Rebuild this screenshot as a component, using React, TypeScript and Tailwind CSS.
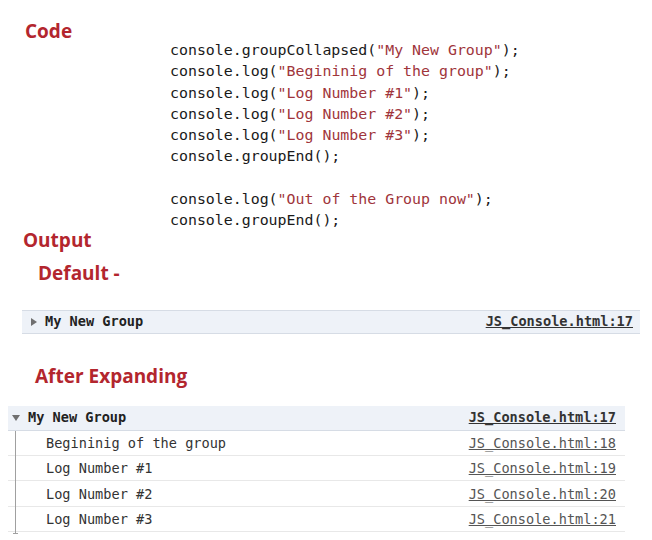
import React from "react";

const mono = { fontFamily: '"DejaVu Sans Mono", "Liberation Mono", monospace' };
const heading = { fontFamily: '"Open Sans", "Noto Sans", sans-serif' };

const S = ({ children }: { children: React.ReactNode }) => (
  <span className="text-[#a0353b]">{children}</span>
);

function Right() {
  return (
    <svg width="6" height="8" viewBox="0 0 6 8" className="shrink-0">
      <path d="M0 0 L6 4 L0 8 Z" fill="#707070" />
    </svg>
  );
}
function Down() {
  return (
    <svg width="8" height="6" viewBox="0 0 8 6" className="shrink-0">
      <path d="M0 0 L8 0 L4 6 Z" fill="#707070" />
    </svg>
  );
}

const rows = [
  ["Begininig of the group", "JS_Console.html:18"],
  ["Log Number #1", "JS_Console.html:19"],
  ["Log Number #2", "JS_Console.html:20"],
  ["Log Number #3", "JS_Console.html:21"],
];

export default function App() {
  return (
    <div className="w-[652px] h-[540px] bg-white overflow-hidden flex flex-col">
      <div className="flex">
        <div className="w-[170px] pl-[25px] pt-[18px]">
          <div style={heading} className="text-[19px] leading-[26px] font-bold text-[#b3262e]">Code</div>
        </div>
        <div style={mono} className="pt-[40px] text-[14.9px] leading-[21.3px] text-[#1a1a1a] whitespace-pre">
          <div>console.groupCollapsed(<S>"My New Group"</S>);</div>
          <div>console.log(<S>"Begininig of the group"</S>);</div>
          <div>console.log(<S>"Log Number #1"</S>);</div>
          <div>console.log(<S>"Log Number #2"</S>);</div>
          <div>console.log(<S>"Log Number #3"</S>);</div>
          <div>console.groupEnd();</div>
          <div>&nbsp;</div>
          <div>console.log(<S>"Out of the Group now"</S>);</div>
          <div>console.groupEnd();</div>
        </div>
      </div>

      <div style={heading} className="mt-[-3px] pl-[23px] text-[19px] leading-[22px] font-bold text-[#b3262e]">Output</div>
      <div style={heading} className="mt-[11px] pl-[38px] text-[19px] leading-[22px] font-bold text-[#b3262e]">Default -</div>

      <div
        style={mono}
        className="mt-[26px] ml-[22px] w-[618px] h-[24px] bg-[#eef2f8] border-y border-[#d6dce5] flex items-center pl-[9px] pr-[7px] text-[13.6px]"
      >
        <Right />
        <span className="ml-[8px] font-bold text-[#222]">My New Group</span>
        <span className="ml-auto font-bold underline text-[#333]">JS_Console.html:17</span>
      </div>

      <div style={heading} className="mt-[31px] pl-[35px] text-[19px] leading-[22px] font-bold text-[#b3262e]">After Expanding</div>

      <div style={mono} className="mt-[19px] ml-[8px] w-[617px] text-[13.6px] relative">
        <div className="h-[25px] bg-[#eef2f8] border-b border-[#d6dce5] flex items-center pl-[4px] pr-[9px]">
          <Down />
          <span className="ml-[8px] font-bold text-[#222]">My New Group</span>
          <span className="ml-auto font-bold underline text-[#333]">JS_Console.html:17</span>
        </div>
        {rows.map(([t, l]) => (
          <div key={l} className="h-[25.3px] border-b border-[#e8e8e8] flex items-center pl-[38px] pr-[9px] pt-px">
            <span className="text-[#333]">{t}</span>
            <span className="ml-auto underline text-[#555]">{l}</span>
          </div>
        ))}
        <div className="absolute left-[7px] top-[25px] bottom-[-2px] w-px bg-[#a0a0a0]" />
        <div className="absolute left-[5px] bottom-[-2px] w-[5px] h-px bg-[#a0a0a0]" />
      </div>
    </div>
  );
}
